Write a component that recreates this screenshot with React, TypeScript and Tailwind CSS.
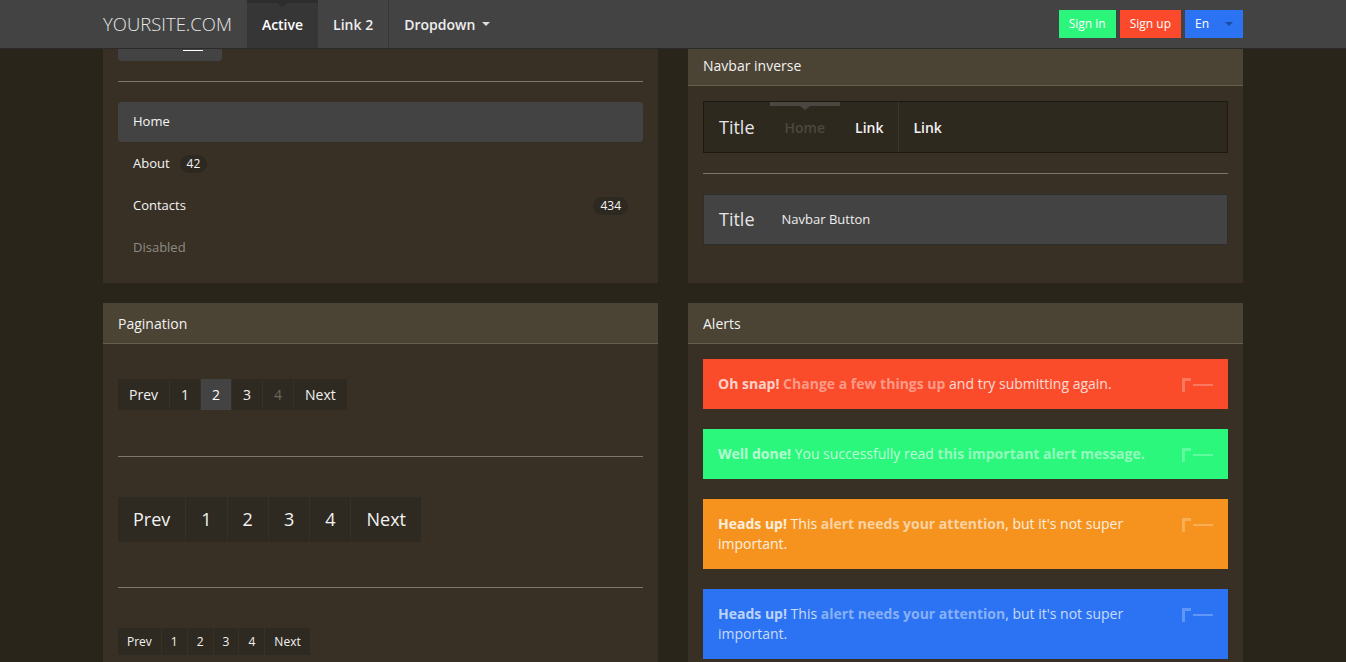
import type { ReactNode } from "react";

function CloseMark() {
  return (
    <svg
      width="31"
      height="14"
      viewBox="0 0 31 14"
      className="absolute right-[15px] top-[19px] fill-white opacity-25"
    >
      <rect x="0" y="0" width="3" height="14" />
      <rect x="0" y="0" width="9" height="3" />
      <rect x="11" y="6" width="20" height="2" />
    </svg>
  );
}

function Alert({ color, children }: { color: string; children: ReactNode }) {
  return (
    <div className={`relative py-[15px] pl-[15px] pr-[60px] text-[14px] leading-[20px] ${color}`}>
      {children}
      <CloseMark />
    </div>
  );
}

function PanelHeader({ title }: { title: string }) {
  return (
    <div className="flex h-[41px] items-center border-b border-[#675f4e] bg-[#4b4333] px-[15px] text-[14px] text-[#f2f2f2]">
      {title}
    </div>
  );
}

type PageItem = { label: string; active?: boolean; disabled?: boolean };

function Pagination({ items, size }: { items: PageItem[]; size: "sm" | "md" | "lg" }) {
  const sizeClass =
    size === "lg"
      ? "h-[45px] px-[15px] text-[18px]"
      : size === "sm"
        ? "h-[27px] px-[9px] text-[12px]"
        : "h-[31px] px-[11px] text-[14px]";
  return (
    <div className="flex gap-px">
      {items.map((item) => (
        <span
          key={item.label}
          className={`flex items-center ${sizeClass} ${
            item.active
              ? "bg-[#434343] text-white"
              : item.disabled
                ? "bg-[#2e2a21] text-[#6c675c]"
                : "bg-[#2e2a21] text-[#f2f2f2]"
          }`}
        >
          {item.label}
        </span>
      ))}
    </div>
  );
}

export default function App() {
  const pages: PageItem[] = [
    { label: "Prev" },
    { label: "1" },
    { label: "2", active: true },
    { label: "3" },
    { label: "4", disabled: true },
    { label: "Next" },
  ];
  const plainPages: PageItem[] = ["Prev", "1", "2", "3", "4", "Next"].map((label) => ({ label }));

  return (
    <div className="h-[662px] overflow-hidden bg-[#2a251b] font-['Open_Sans',sans-serif] text-[13px] text-white">
      {/* Fixed top navbar */}
      <header className="fixed inset-x-0 top-0 z-10 h-[49px] border-b border-[#2a2a2a] bg-[#434343]">
        <div className="mx-auto flex h-12 w-[1140px] items-stretch text-[14px]">
          <div className="flex items-center pr-[15px] text-[18.5px] font-light text-[#e8e8e8]">YOURSITE.COM</div>
          <div className="relative flex items-center bg-[#363636] px-[15px] font-semibold text-white">
            <span className="absolute inset-x-0 top-0 h-[3px] bg-[#2d2d2d]" />
            <span className="absolute left-1/2 top-[3px] -translate-x-1/2 border-x-[5px] border-t-[4px] border-x-transparent border-t-[#2d2d2d]" />
            Active
          </div>
          <div className="flex items-center border-r border-[#383838] px-[15px] font-semibold text-[#eeeeee]">Link 2</div>
          <div className="flex items-center px-[15px] font-semibold text-[#eeeeee]">
            Dropdown
            <span className="ml-[7px] border-x-[4px] border-t-[4px] border-x-transparent border-t-[#dddddd]" />
          </div>
          <div className="ml-auto flex items-center gap-[4px] text-[12px]">
            <span className="flex h-[28px] items-center bg-[#2cf57b] px-[10px] text-white">Sign in</span>
            <span className="flex h-[28px] items-center bg-[#fa4a2b] px-[10px] text-white">Sign up</span>
            <span className="flex h-[28px] w-[58px] items-center justify-between bg-[#2b73f2] px-[10px] text-white">
              En
              <span className="border-x-[4px] border-t-[4px] border-x-transparent border-t-[#1d4ca3]" />
            </span>
          </div>
        </div>
      </header>

      <main className="mx-auto w-[1140px] pt-[45px]">
        <div className="grid grid-cols-2 gap-x-[30px] gap-y-[20px]">
          {/* Nav list panel */}
          <section className="bg-[#383024] px-[15px] pb-[15px]">
            <div className="relative h-[16px] w-[104px] rounded-b-[4px] bg-[#434343]">
              <span className="absolute left-[65px] top-[5px] h-[1px] w-[20px] bg-white" />
            </div>
            <hr className="my-[20px] border-[#7d7668]" />
            <ul className="flex flex-col gap-[2px]">
              <li className="flex h-[40px] items-center rounded-[4px] bg-[#434343] px-[15px] text-[#f5f5f5]">Home</li>
              <li className="flex h-[40px] items-center px-[15px] text-[#f5f5f5]">
                About
                <span className="ml-[10px] rounded-full bg-[#2d2820] px-[7px] py-[1px] text-[12px] leading-[16px]">42</span>
              </li>
              <li className="flex h-[40px] items-center justify-between px-[15px] text-[#f5f5f5]">
                Contacts
                <span className="rounded-full bg-[#2d2820] px-[7px] py-[1px] text-[12px] leading-[16px]">434</span>
              </li>
              <li className="flex h-[40px] items-center px-[15px] text-[#8f8b83]">Disabled</li>
            </ul>
          </section>

          {/* Navbar inverse panel */}
          <section className="bg-[#383024]">
            <PanelHeader title="Navbar inverse" />
            <div className="p-[15px]">
              <div className="flex h-[52px] items-stretch border border-[#1c1913] bg-[#2e291f] text-[14px]">
                <div className="flex items-center px-[15px] text-[18px] text-[#e5e5e5]">Title</div>
                <div className="relative flex items-center px-[15px] font-semibold text-[#4d483e]">
                  <span className="absolute inset-x-0 top-0 h-[4px] bg-[#4a4741]" />
                  <span className="absolute left-1/2 top-[4px] -translate-x-1/2 border-x-[5px] border-t-[4px] border-x-transparent border-t-[#4a4741]" />
                  Home
                </div>
                <div className="flex items-center border-r border-[#3b352b] px-[15px] font-semibold text-[#f2f2f2]">Link</div>
                <div className="flex items-center px-[14px] font-semibold text-[#f2f2f2]">Link</div>
              </div>
              <hr className="my-[20px] border-[#7d7668]" />
              <div className="flex h-[51px] items-center border border-[#2e2e2e] bg-[#434343]">
                <div className="px-[15px] text-[18px] text-[#e5e5e5]">Title</div>
                <span className="ml-[12px] text-[#eeeeee]">Navbar Button</span>
              </div>
            </div>
          </section>

          {/* Pagination panel */}
          <section className="bg-[#383024]">
            <PanelHeader title="Pagination" />
            <div className="px-[15px] pt-[35px] pb-[20px]">
              <Pagination items={pages} size="md" />
              <hr className="mb-[40px] mt-[46px] border-[#7d7668]" />
              <Pagination items={plainPages} size="lg" />
              <hr className="mb-[40px] mt-[45px] border-[#7d7668]" />
              <Pagination items={plainPages} size="sm" />
            </div>
          </section>

          {/* Alerts panel */}
          <section className="bg-[#383024]">
            <PanelHeader title="Alerts" />
            <div className="flex flex-col gap-[20px] px-[15px] pt-[15px] pb-[20px]">
              <Alert color="bg-[#fa4b2a]">
                <b className="font-bold text-white/75">Oh snap!</b>{" "}
                <b className="font-bold text-white/45">Change a few things up</b>{" "}
                <span className="text-white/80">and try submitting again.</span>
              </Alert>
              <Alert color="bg-[#2bf77c]">
                <b className="font-bold text-white/65">Well done!</b>{" "}
                <span className="text-white/70">You successfully read</span>{" "}
                <b className="font-bold text-white/50">this important alert message.</b>
              </Alert>
              <Alert color="bg-[#f5931e]">
                <b className="font-bold text-white/85">Heads up!</b>{" "}
                <span className="text-white/85">This</span>{" "}
                <b className="font-bold text-white/60">alert needs your attention</b>
                <span className="text-white/85">, but it's not super</span>
                <br />
                <span className="text-white/85">important.</span>
              </Alert>
              <Alert color="bg-[#2b73f2]">
                <b className="font-bold text-white/70">Heads up!</b>{" "}
                <span className="text-white/75">This</span>{" "}
                <b className="font-bold text-white/45">alert needs your attention</b>
                <span className="text-white/75">, but it's not super</span>
                <br />
                <span className="text-white/75">important.</span>
              </Alert>
            </div>
          </section>
        </div>
      </main>
    </div>
  );
}
